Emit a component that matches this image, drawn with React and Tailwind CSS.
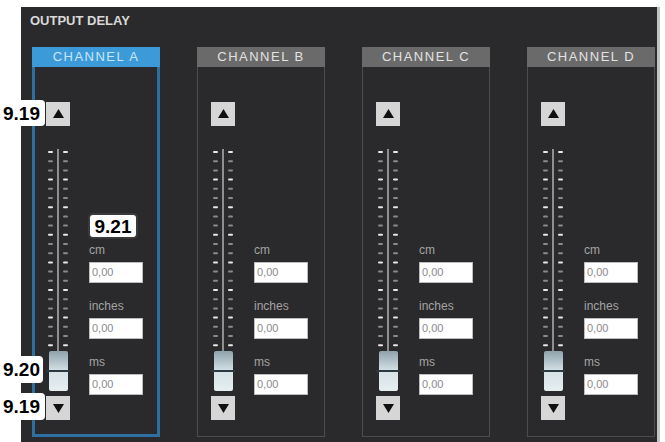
const CHANNELS = ['A', 'B', 'C', 'D']
const UNITS = ['cm', 'inches', 'ms']

function Arrow({ down }) {
  return (
    <div className="w-[24px] h-[24px] bg-[#d6d6d6] flex items-center justify-center">
      <svg width="11" height="10" viewBox="0 0 11 10">
        <polygon points={down ? '0,1 11,1 5.5,10' : '5.5,0 11,9 0,9'} fill="#111" />
      </svg>
    </div>
  )
}

function Track() {
  const ticks = Array.from({ length: 22 }, (_, i) => i)
  return (
    <svg width="24" height="202" className="block">
      <rect x="11" y="0" width="2" height="202" fill="#8f8f8f" />
      {ticks.map((i) => {
        const y = 2 + i * 9.2
        const c = i % 3 === 0 ? '#e8e8e8' : '#8a8a8a'
        return (
          <g key={i}>
            <rect x="2" y={y} width="5" height="2" rx="1" fill={c} />
            <rect x="17" y={y} width="5" height="2" rx="1" fill={c} />
          </g>
        )
      })}
    </svg>
  )
}

function Thumb() {
  return (
    <div className="relative w-[24px] h-[40px] flex justify-center">
      <div className="w-[19px] h-[40px] rounded-[2px] bg-gradient-to-b from-[#8fa2ac] via-[#d6e2e7] to-[#e6eef0]" />
      <div className="absolute left-0 top-[19px] w-[24px] h-[2px] bg-[#2b3a40]" />
    </div>
  )
}

function Channel({ name }) {
  const active = name === 'A'
  return (
    <div className="w-[128px] flex flex-col">
      <div
        className={
          active
            ? 'h-[20px] bg-[#3d9ad8] text-[#c9e6f8] text-[13px] leading-[20px] tracking-[1.5px] text-center'
            : 'h-[20px] bg-[#6a6a6a] text-[#e2e2e2] text-[13px] leading-[20px] tracking-[1.5px] text-center'
        }
      >
        CHANNEL {name}
      </div>
      <div
        className={
          active
            ? 'h-[370px] border-[3px] border-t-0 border-[#2d6f9f] flex pl-[11px]'
            : 'h-[370px] border border-t-0 border-[#4c4c4e] flex pl-[13px]'
        }
      >
        <div className="w-[24px] flex flex-col">
          <div className="mt-[35px]">
            <Arrow />
          </div>
          <div className="mt-[23px]">
            <Track />
          </div>
          <Thumb />
          <div className="mt-[5px]">
            <Arrow down />
          </div>
        </div>
        <div className="ml-[19px] flex flex-col">
          {UNITS.map((u, i) => (
            <div key={u} className={i === 0 ? 'mt-[176px]' : 'mt-[16px]'}>
              <div className="text-[12px] leading-[14px] text-[#a3a3a3]">{u}</div>
              <div className="mt-[5px] w-[54px] h-[21px] bg-white border border-[#bcbcbc] text-[11px] leading-[19px] pl-[2px] text-[#8a8a8a]">
                0,00
              </div>
            </div>
          ))}
        </div>
      </div>
    </div>
  )
}

function Tag({ className, children }) {
  return (
    <div
      className={
        'absolute bg-white text-black font-bold text-[19px] leading-none flex items-center ' + className
      }
    >
      {children}
    </div>
  )
}

export default function App() {
  return (
    <div className="relative w-[665px] h-[442px] bg-white overflow-hidden font-['Liberation_Sans',Arial,sans-serif]">
      <div className="ml-[21px] mt-[7px] w-[639px] h-[435px] bg-[#2a2a2c] border-r-[3px] border-[#c4c4c4]">
        <div className="pl-[9px] pt-[6px] text-[13px] leading-[15px] font-bold text-[#d9d9d9]">
          OUTPUT DELAY
        </div>
        <div className="mt-[19px] pl-[11px] flex gap-[37px]">
          {CHANNELS.map((c) => (
            <Channel key={c} name={c} />
          ))}
        </div>
      </div>

      <Tag className="left-0 top-[100px] w-[45px] h-[26px] pl-[3px] rounded-r-[4px]">9.19</Tag>
      <Tag className="left-[88px] top-[213px] w-[50px] h-[26px] justify-center rounded-[5px] border-2 border-[#3a3a3a]">
        9.21
      </Tag>
      <Tag className="left-0 top-[356px] w-[43px] h-[27px] pl-[3px] rounded-r-[4px]">9.20</Tag>
      <Tag className="left-0 top-[393px] w-[45px] h-[27px] pl-[3px] rounded-r-[4px]">9.19</Tag>
    </div>
  )
}
